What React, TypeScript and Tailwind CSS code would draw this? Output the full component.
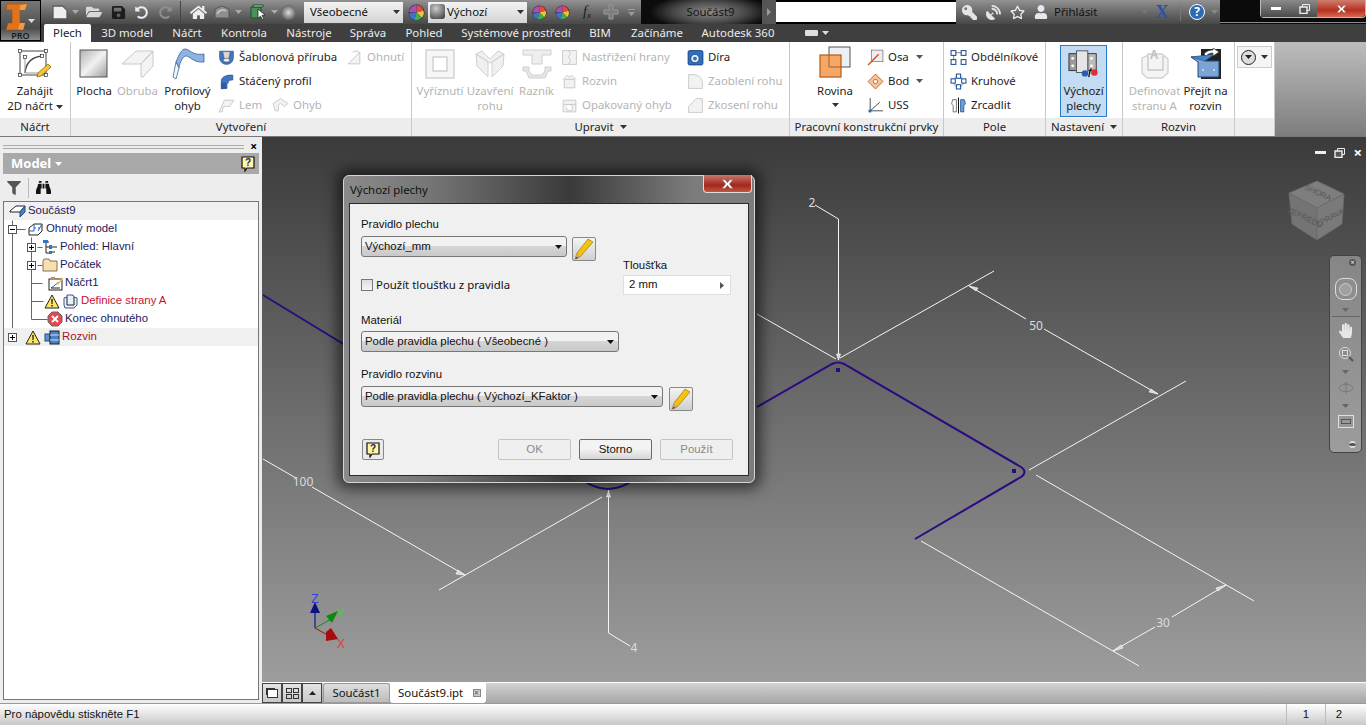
import { ReactNode } from "react";
import { FaHome, FaFolderOpen, FaSave, FaUndoAlt, FaRedoAlt, FaKey, FaRegStar, FaUser, FaSatelliteDish, FaFilter, FaBinoculars, FaHandPaper } from "react-icons/fa";

function Caret({ className = "", color = "#555" }: { className?: string; color?: string }) {
    return (
        <svg width="7" height="4" viewBox="0 0 7 4" className={className}>
            <path d="M0 0h7L3.5 4z" fill={color} />
        </svg>
    );
}

function Ico({ size = 17, children }: { size?: number; children: ReactNode }) {
    return <svg width={size} height={size} viewBox="0 0 32 32" className="shrink-0">{children}</svg>;
}

/* ---------- small drawings ---------- */
const Pencil = () => (
    <svg width="20" height="22" viewBox="0 0 20 22">
        <path d="M14 1l5 3L6 19 1 21l2-6z" fill="#f4c20d" stroke="#8a6b00" strokeWidth=".6" />
        <path d="M3 15l3 4-5 2z" fill="#caa27a" />
        <path d="M1 21l2-2 1 1z" fill="#111" />
    </svg>
);
const Warn = () => (
    <svg width="16" height="15" viewBox="0 0 16 15" className="shrink-0">
        <path d="M8 1l7 13H1z" fill="#ffe566" stroke="#222" strokeWidth="1" strokeLinejoin="round" />
        <path d="M7.3 5h1.4l-.2 5h-1zM7.3 11h1.4v1.4H7.3z" fill="#111" />
    </svg>
);
const ErrorIcon = () => (
    <svg width="16" height="16" viewBox="0 0 16 16" className="shrink-0">
        <path d="M5 1h6l4 4v6l-4 4H5l-4-4V5z" fill="#e8474f" stroke="#666" />
        <path d="M5 5l6 6M11 5l-6 6" stroke="#fff" strokeWidth="2" />
    </svg>
);
const HelpBook = () => (
    <svg width="14" height="16" viewBox="0 0 14 16">
        <path d="M1 1h12v11H6l-2 3v-3H1z" fill="#fff7a8" stroke="#111" strokeWidth="1.2" />
        <text x="7" y="10" textAnchor="middle" fontSize="10" fontWeight="700" fill="#1a1a6a" fontFamily="Liberation Sans, sans-serif">?</text>
    </svg>
);
const Expand = ({ open = false }: { open?: boolean }) => (
    <span className="relative flex h-[9px] w-[9px] shrink-0 items-center justify-center border border-[#555] bg-white">
        <span className="h-px w-[5px] bg-black" />
        {!open && <span className="absolute h-[5px] w-px bg-black" />}
    </span>
);

const Sketch2D = () => (
    <svg width="34" height="30" viewBox="0 0 34 30">
        <rect x="2" y="2" width="26" height="24" fill="none" stroke="#444" />
        <path d="M7 24C8 13 14 8 24 7" fill="none" stroke="#444" strokeWidth="1.4" />
        <path d="M7 24h15M7 24V8" fill="none" stroke="#999" />
        {[[2, 2], [28, 2], [2, 26], [28, 26], [7, 8], [24, 7]].map(([x, y]) => <rect key={x + "-" + y} x={x - 1.5} y={y - 1.5} width="3" height="3" fill="#fff" stroke="#333" strokeWidth=".7" />)}
        <path d="M30 15l3 3-10 9-4 1 1-4z" fill="#f7c531" stroke="#7a5a00" strokeWidth=".7" />
    </svg>
);
const Plocha = () => (
    <svg width="30" height="30" viewBox="0 0 30 30">
        <defs><linearGradient id="pl" x1="0" y1="0" x2="1" y2="1"><stop offset="0" stopColor="#b0b0b0" /><stop offset=".5" stopColor="#f2f2f2" /><stop offset="1" stopColor="#9d9d9d" /></linearGradient></defs>
        <rect x="1" y="1" width="27" height="27" fill="url(#pl)" stroke="#555" />
    </svg>
);
const Obruba = () => (
    <svg width="34" height="30" viewBox="0 0 34 30">
        <path d="M1 15L15 2h17l-12 13H1zM20 15l12-13v15L22 28h-2z" fill="#f3f3f3" stroke="#c8c8c8" />
    </svg>
);
const Profil = () => (
    <svg width="34" height="32" viewBox="0 0 34 32">
        <path d="M5 14C8 6 11 1 14 1c5 0 7 7 19 5v8C22 15 19 8 15 8c-3 0-6 6-7 12z" fill="#8db3e2" stroke="#27528c" strokeWidth=".7" />
        <path d="M5 14l3 6-3 11-3-2z" fill="#f2f5fa" stroke="#27528c" strokeWidth=".7" />
    </svg>
);
const Template = () => (
    <Ico><path d="M3 4h26v12c0 8-6 13-13 13S3 24 3 16z" fill="#3f76bd" stroke="#1f3f70" /><path d="M9 5h14l-3 14h-8z" fill="#d8d8d8" stroke="#555" /><ellipse cx="16" cy="21" rx="6" ry="3.5" fill="#eee" stroke="#444" /></Ico>
);
const Twist = () => (
    <Ico><path d="M6 30V16C6 8 14 3 28 4v9c-6 0-9 2-9 6l-2 2v8z" fill="#3d77c4" stroke="#1f3f70" /><path d="M6 18h9v12H6z" fill="#2f5c98" /></Ico>
);
const GrayShape = ({ d }: { d: string }) => <Ico><path d={d} fill="#f2f2f2" stroke="#c4c4c4" strokeWidth="1.6" /></Ico>;

const Vyriznuti = () => (
    <svg width="30" height="30" viewBox="0 0 30 30"><rect x="1" y="1" width="28" height="28" fill="#f6f6f6" stroke="#d0d0d0" strokeWidth="1.4" /><rect x="8" y="8" width="14" height="14" fill="#fff" stroke="#cfcfcf" strokeWidth="1.4" /></svg>
);
const Uzavreni = () => (
    <svg width="30" height="30" viewBox="0 0 30 30"><path d="M1 5l12 8v15L2 17zM29 5L17 13v15l11-11zM1 5l6-3 8 8 8-8 6 3-14 9z" fill="#f0f0f0" stroke="#d0d0d0" /></svg>
);
const Raznik = () => (
    <svg width="30" height="32" viewBox="0 0 30 32"><path d="M1 2h28v5H20v9h-10V7H1z" fill="#eee" stroke="#cfcfcf" /><path d="M1 19h6v4l3 4h10l3-4v-4h6v4h-3l-3 7H7l-3-7H1z" fill="#e6e6e6" stroke="#cfcfcf" /></svg>
);
const Rovina = () => (
    <svg width="32" height="32" viewBox="0 0 32 32"><rect x="10" y="1" width="21" height="20" fill="#eceff3" stroke="#555" /><rect x="1" y="9" width="21" height="22" fill="#f4a766" stroke="#b9590f" strokeWidth="1.2" /><path d="M10 9v12h12" fill="none" stroke="#a85c20" /></svg>
);
const Holes = () => (
    <svg width="32" height="30" viewBox="0 0 34 30">
        <rect x="1" y="4" width="8" height="18" fill="#999" stroke="#333" /><rect x="21" y="4" width="9" height="18" fill="#bbb" stroke="#333" />
        <rect x="9" y="1" width="12" height="23" fill="#e5e5e5" stroke="#555" />
        <circle cx="5" cy="9" r="1.5" fill="#fff" /><circle cx="5" cy="17" r="1.5" fill="#fff" /><circle cx="25" cy="9" r="1.5" fill="#fff" /><circle cx="25" cy="17" r="1.5" fill="#fff" />
        <circle cx="18" cy="25" r="3.4" fill="#2460ae" /><circle cx="28" cy="24" r="3.4" fill="#d92f35" />
        <path d="M22 29c1-4 1-8 3-9" fill="none" stroke="#111" strokeWidth="1.4" />
    </svg>
);
const DefA = () => (
    <svg width="34" height="32" viewBox="0 0 34 32">
        <path d="M4 10l6-3v-1h14l6 5v14l-6 5H9l-5-5z" fill="#f4f4f4" stroke="#cfcfcf" strokeWidth="1.3" />
        <path d="M10 8v14h15V8" fill="none" stroke="#c6c6c6" strokeWidth="1.3" />
        <text x="16" y="11" fontSize="12" fill="#c0c0c0" textAnchor="middle" fontFamily="Liberation Sans, sans-serif" fontWeight="700">A</text>
    </svg>
);
const Unfold = () => (
    <svg width="32" height="32" viewBox="0 0 32 32">
        <path d="M11 1h20v30H11z" fill="#222" />
        <path d="M1 9h11l3 4h14v16H8V14z" fill="#7ba3d4" stroke="#1f4a83" />
        <path d="M1 9l24-3-10 7z" fill="#4a82c7" stroke="#1f4a83" strokeWidth=".6" />
        <path d="M14 6c2-3 6-4 9-4V0l6 4-6 4V5c-3 0-5 1-7 3z" fill="#fff" stroke="#444" strokeWidth=".7" />
        <circle cx="13" cy="22" r="1" fill="#dbe6f3" /><circle cx="24" cy="22" r="1" fill="#dbe6f3" />
    </svg>
);
const Wheel = ({ size = 16 }: { size?: number }) => (
    <svg width={size} height={size} viewBox="0 0 16 16" className="shrink-0">
        <circle cx="8" cy="8" r="7.5" fill="#2a2a2a" />
        <path d="M8 8V1a7 7 0 0 1 6.5 5z" fill="#e8483f" /><path d="M8 8l6.5-2a7 7 0 0 1-1.5 7z" fill="#e6c63a" />
        <path d="M8 8l5 5a7 7 0 0 1-7 2z" fill="#44ad4e" /><path d="M8 8l-2 7a7 7 0 0 1-5-6z" fill="#3478d0" />
        <path d="M8 8H1a7 7 0 0 1 7-7z" fill="#a84fb6" />
    </svg>
);
const WinX = ({ size = 11 }: { size?: number }) => (
    <svg width={size} height={size - 3} viewBox="0 0 11 8"><path d="M1 0.5h2.5L5.5 3l2-2.5H10L7 4l3 3.5H7.5L5.5 5l-2 2.5H1L4 4z" fill="#fff" stroke="#777" strokeWidth=".4" /></svg>
);
const Restore = () => (
    <svg width="11" height="10" viewBox="0 0 11 10"><path d="M3.5.5h7v6h-7z" fill="none" stroke="#eee" /><path d="M1 3h7v6.5H1z" fill="#555" stroke="#eee" strokeWidth="1.4" /></svg>
);

/* ---------- ribbon pieces ---------- */
function Large({ icon, lines, width, disabled, caret }: { icon: ReactNode; lines: string[]; width: string; disabled?: boolean; caret?: boolean }) {
    return (
        <div className={`flex h-[76px] shrink-0 flex-col items-center pt-[4px] leading-[15px] ${width} ${disabled ? "text-[#b4b4b4]" : "text-[#1d1d1d]"}`}>
            <div className="flex h-[36px] items-center justify-center">{icon}</div>
            <div className="mt-[1px] text-center whitespace-nowrap">{lines[0]}</div>
            <div className="text-center whitespace-nowrap">{lines[1]}{caret && <Caret className="ml-[3px] inline align-middle" color="#333" />}</div>
        </div>
    );
}
function Small({ icon, label, disabled, caret, className = "" }: { icon: ReactNode; label: string; disabled?: boolean; caret?: boolean; className?: string }) {
    return (
        <div className={`flex h-[24px] items-center gap-[4px] whitespace-nowrap ${disabled ? "text-[#b4b4b4]" : "text-[#1d1d1d]"} ${className}`}>
            {icon}<span>{label}</span>{caret && <Caret className="ml-[3px]" />}
        </div>
    );
}
function Panel({ width, title, children, caret }: { width: string; title: string; children?: ReactNode; caret?: boolean }) {
    return (
        <div className={`flex shrink-0 flex-col border-r border-[#c9c9c9] ${width}`}>
            <div className="flex h-[76px] bg-white">{children}</div>
            <div className="flex h-[18px] items-center justify-center gap-[6px] bg-[#ededed] text-[#222]">{title}{caret && <Caret color="#333" />}</div>
        </div>
    );
}
const Col = ({ className = "", children }: { className?: string; children: ReactNode }) => <div className={`flex flex-col pt-[3px] ${className}`}>{children}</div>;

const tabs = [
    { label: "3D model", w: "w-[72px]" }, { label: "Náčrt", w: "w-[48px]" }, { label: "Kontrola", w: "w-[66px]" },
    { label: "Nástroje", w: "w-[64px]" }, { label: "Správa", w: "w-[54px]" }, { label: "Pohled", w: "w-[58px]" },
    { label: "Systémové prostředí", w: "w-[126px]" }, { label: "BIM", w: "w-[42px]" }, { label: "Začínáme", w: "w-[72px]" }, { label: "Autodesk 360", w: "w-[90px]" },
];

function AppButton() {
    return (
        <div className="absolute top-0 left-0 z-10 flex h-[41px] w-[41px] flex-col items-center border border-black bg-[linear-gradient(#777,#4c4c4c_70%,#8e8e8e)]">
            <svg width="26" height="28" viewBox="0 0 26 28" className="mt-[2px] mr-[6px]">
                <path d="M2 1h20l-2 6h-5v13h5l-2 7H1l2-7h4V7H1z" fill="#e0741e" stroke="#a34d0c" strokeWidth=".6" />
                <path d="M15 7h5l2-6-7 1zM15 20h5l-2 7-5-1z" fill="#f29a45" />
            </svg>
            <Caret className="absolute top-[18px] right-[5px]" color="#ddd" />
            <span className="text-[9px] leading-[9px] font-semibold text-[#1a1a1a]">PRO</span>
        </div>
    );
}

function TitleBar() {
    const Q = ({ w, children }: { w: string; children?: ReactNode }) => <div className={`flex h-[24px] shrink-0 items-center justify-center ${w}`}>{children}</div>;
    const bar = "bg-[linear-gradient(#929292,#6a6a6a_50%,#484848)]";
    return (
        <div className="flex h-[24px] bg-black">
            <div className={`flex h-[24px] w-[641px] shrink-0 items-center pl-[52px] text-[#e4e4e4] ${bar}`}>
                <Q w="w-[16px]"><svg width="16" height="15" viewBox="0 0 15 14"><path d="M1 1h9l4 4v8H1z" fill="#eee" stroke="#555" /></svg></Q>
                <Q w="w-[14px]"><Caret color="#aaa" /></Q>
                <Q w="w-[24px]"><FaFolderOpen size={16} color="#d8d8d8" /></Q>
                <Q w="w-[24px]"><FaSave size={15} color="#1d1d1d" /></Q>
                <Q w="w-[23px]"><FaUndoAlt size={13} color="#ececec" /></Q>
                <Q w="w-[24px]"><FaRedoAlt size={13} color="#8e8e8e" /></Q>
                <div className="mx-[3px] h-[22px] w-px bg-[#444]" />
                <div className="w-[3px]" />
                <Q w="w-[24px]"><FaHome size={17} color="#eee" /></Q>
                <Q w="w-[24px]"><svg width="16" height="14" viewBox="0 0 16 14"><path d="M1 4l7-3 7 3v9H1z" fill="#8f8f8f" stroke="#555" /><path d="M3 9c2-4 6-5 9-3" fill="none" stroke="#ccc" strokeWidth="1.5" /></svg></Q>
                <Q w="w-[8px]"><Caret color="#aaa" /></Q>
                <div className="w-[5px]" />
                <Q w="w-[24px]"><svg width="17" height="16" viewBox="0 0 17 16"><path d="M1 3h10v11H1z" fill="#46935a" stroke="#1e4e2b" /><path d="M3 1h10v2H3z" fill="#bcd6c2" stroke="#1e4e2b" /><path d="M8 5l7 6-3 .5 2 3.5-1.5.7-2-3.5-2.5 2z" fill="#fff" stroke="#111" strokeWidth=".7" /></svg></Q>
                <Q w="w-[8px]"><Caret color="#aaa" /></Q>
                <Q w="w-[20px]"><span className="h-[15px] w-[15px] rounded-full bg-[radial-gradient(circle,#ddd,#999_40%,#333)]" /></Q>
                <div className="mr-[1px] ml-[6px] flex h-[21px] w-[99px] shrink-0 items-center justify-between bg-[linear-gradient(#f3f3f3,#d4d4d4)] pr-[3px] pl-[6px] text-[#111]">Všeobecné<Caret color="#333" /></div>
                <Q w="w-[24px]"><Wheel size={17} /></Q>
                <div className="flex h-[21px] w-[99px] shrink-0 items-center justify-between bg-[linear-gradient(#f3f3f3,#d4d4d4)] pr-[3px] pl-[2px] text-[#111]"><span className="flex items-center gap-[2px]"><span className="h-[15px] w-[15px] rounded-[3px] bg-[radial-gradient(circle_at_40%_30%,#ccc,#333)]" />Výchozí</span><Caret color="#333" /></div>
                <Q w="w-[24px]"><Wheel size={15} /></Q>
                <Q w="w-[23px]"><Wheel size={15} /></Q>
                <Q w="w-[26px]"><span className="font-['Liberation_Serif'] text-[14px] leading-none text-[#1a1a1a] italic">f<sub className="text-[9px]">x</sub></span></Q>
                <Q w="w-[22px]"><svg width="16" height="16" viewBox="0 0 16 16"><path d="M6 1h4v5h5v4h-5v5H6v-5H1V6h5z" fill="#7e7e7e" stroke="#999" /></svg></Q>
                <Q w="w-[19px]"><span className="flex flex-col items-center gap-[2px]"><span className="h-px w-[7px] bg-[#9a9a9a]" /><Caret color="#9a9a9a" /></span></Q>
            </div>
            <div className="flex h-[24px] w-[121px] shrink-0 items-center justify-center bg-[radial-gradient(ellipse_60px_18px_at_57%_50%,#8a8a8a,#484848_60%,#0c0c0c)] pl-[18px] text-[#141414]">Součást9</div>
            <div className="flex h-[24px] w-[14px] shrink-0 items-center justify-center bg-[#555]"><svg width="4" height="8" viewBox="0 0 4 8"><path d="M0 0l4 4-4 4z" fill="#999" /></svg></div>
            <div className="my-[2px] h-[20px] w-[180px] shrink-0 bg-white" />
            <div className={`flex h-[24px] w-[264px] shrink-0 items-center pl-[1px] text-[#ececec] ${bar}`}>
                <Q w="w-[24px]"><FaKey size={15} color="#e4e4e4" className="-scale-x-100" /></Q>
                <Q w="w-[24px]"><FaSatelliteDish size={15} color="#e4e4e4" /></Q>
                <Q w="w-[24px]"><FaRegStar size={15} color="#f2f2f2" /></Q>
                <Q w="w-[24px]"><FaUser size={14} color="#e8e8e8" /></Q>
                <span className="ml-[1px] w-[85px] text-[#111]">Přihlásit</span>
                <Q w="w-[12px]"><Caret color="#777" /></Q>
                <div className="w-[2px]" />
                <Q w="w-[20px]"><span className="font-['Liberation_Serif'] text-[18px] leading-none font-bold text-[#2f4fa8]">X</span></Q>
                <div className="ml-[8px] h-[17px] w-px bg-[#777]" />
                <div className="w-[5px]" />
                <Q w="w-[22px]"><span className="flex h-[16px] w-[16px] items-center justify-center rounded-full border border-white bg-[#2e6bb4] text-[12px] leading-none font-bold text-white">?</span></Q>
                <Q w="w-[12px]"><Caret color="#888" /></Q>
            </div>
            <div className="flex h-[24px] flex-1 flex-col bg-[#0b0b0b]">
                <div className="ml-[40px] flex h-[18px] rounded-b-[4px] border border-t-0 border-[#bbb] text-white">
                    <div className="flex w-[30px] items-center justify-center bg-[linear-gradient(#8a8a8a,#4a4a4a)]"><span className="h-[3px] w-[10px] bg-white" /></div>
                    <div className="flex w-[26px] items-center justify-center bg-[linear-gradient(#8a8a8a,#4a4a4a)]"><Restore /></div>
                    <div className="flex flex-1 items-center justify-center rounded-br-[4px] bg-[linear-gradient(#cf7d6e,#b8301f_60%,#d56a52)]"><WinX /></div>
                </div>
                <div className="mt-auto mb-[1px] h-px bg-[#8a8a8a]" />
            </div>
        </div>
    );
}

function Ribbon() {
    return (
        <div className="flex h-[95px] shrink-0 border-b border-[#777]">
            <Panel width="w-[71px]" title="Náčrt"><Large width="w-[70px]" icon={<Sketch2D />} lines={["Zahájit", "2D náčrt"]} caret /></Panel>
            <Panel width="w-[341px]" title="Vytvoření">
                <div className="w-[2px]" />
                <Large width="w-[42px]" icon={<Plocha />} lines={["Plocha", ""]} />
                <Large width="w-[45px]" disabled icon={<Obruba />} lines={["Obruba", ""]} />
                <Large width="w-[55px]" icon={<Profil />} lines={["Profilový", "ohyb"]} />
                <Col className="ml-[3px] w-[127px]">
                    <Small icon={<Template />} label="Šablonová příruba" />
                    <Small icon={<Twist />} label="Stáčený profil" />
                    <div className="flex gap-[10px]">
                        <Small disabled icon={<GrayShape d="M2 28L12 6h18l-8 12H10l-2 10z" />} label="Lem" />
                        <Small disabled icon={<GrayShape d="M2 12L16 3l14 9-6 6-8-6-4 3v11H6z" />} label="Ohyb" />
                    </div>
                </Col>
                <Col className="ml-[1px]"><Small disabled icon={<GrayShape d="M4 28L26 6v22zM12 6c6-4 12-2 14 2" />} label="Ohnutí" /></Col>
            </Panel>
            <Panel width="w-[378px]" title="Upravit" caret>
                <div className="w-[3px]" />
                <Large width="w-[50px]" disabled icon={<Vyriznuti />} lines={["Vyříznutí", ""]} />
                <Large width="w-[50px]" disabled icon={<Uzavreni />} lines={["Uzavření", "rohu"]} />
                <Large width="w-[43px]" disabled icon={<Raznik />} lines={["Razník", ""]} />
                <Col className="ml-[3px] w-[126px]">
                    <Small disabled icon={<GrayShape d="M3 3h26v26H3zM14 3l4 6-4 6 4 7-4 7" />} label="Nastřižení hrany" />
                    <Small disabled icon={<GrayShape d="M6 12h20v16H6zM4 12l8-8 4 4 4-4 8 8" />} label="Rozvin" />
                    <Small disabled icon={<GrayShape d="M4 6h24v22H4zM4 14h24M10 20a6 6 0 1 0 6-6" />} label="Opakovaný ohyb" />
                </Col>
                <Col>
                    <Small icon={<Ico><rect x="2" y="3" width="28" height="27" rx="3" fill="#2e6fc0" stroke="#123a70" strokeWidth="1.5" /><circle cx="15" cy="18" r="8" fill="#dfe9f6" stroke="#123a70" strokeWidth="1.5" /><circle cx="15" cy="18" r="3.5" fill="#2e6fc0" /></Ico>} label="Díra" />
                    <Small disabled icon={<GrayShape d="M3 3h10c9 0 16 8 16 16v10H3z" />} label="Zaoblení rohu" />
                    <Small disabled icon={<GrayShape d="M3 29V18L17 3h12v26z" />} label="Zkosení rohu" />
                </Col>
            </Panel>
            <Panel width="w-[154px]" title="Pracovní konstrukční prvky">
                <div className="flex h-[76px] w-[74px] shrink-0 flex-col items-center pt-[4px] pl-[16px] leading-[15px] text-[#1d1d1d]">
                    <div className="h-[36px]"><Rovina /></div>
                    <div className="mt-[1px]">Rovina</div>
                    <Caret className="mt-[5px]" color="#333" />
                </div>
                <Col className="ml-[3px]">
                    <Small caret icon={<Ico><rect x="8" y="2" width="22" height="22" fill="#eee" stroke="#444" /><path d="M2 30L22 10" stroke="#c8501e" strokeWidth="2.4" /></Ico>} label="Osa" />
                    <Small caret icon={<Ico><path d="M16 2l14 14-14 14L2 16z" fill="#f6c39a" stroke="#b9590f" strokeWidth="1.6" /><circle cx="16" cy="16" r="4" fill="#fff" stroke="#b9590f" strokeWidth="1.6" /></Ico>} label="Bod" />
                    <Small icon={<Ico><path d="M6 2v24h24M6 26L24 10" fill="none" stroke="#333" strokeWidth="1.6" /><rect x="3" y="24" width="5" height="5" fill="#2563c7" /></Ico>} label="USS" />
                </Col>
            </Panel>
            <Panel width="w-[102px]" title="Pole">
                <Col className="ml-[6px]">
                    <Small icon={<Ico><g fill="#fff" stroke="#1e4f96" strokeWidth="2"><rect x="2" y="3" width="9" height="9" /><rect x="21" y="3" width="9" height="9" /><rect x="2" y="20" width="9" height="9" /><rect x="21" y="20" width="9" height="9" /></g><path d="M11 7h10M7 12v8" stroke="#111" /></Ico>} label="Obdélníkové" />
                    <Small icon={<Ico><circle cx="16" cy="16" r="10" fill="none" stroke="#555" /><g fill="#fff" stroke="#1e4f96" strokeWidth="2"><rect x="12" y="2" width="8" height="8" /><rect x="2" y="11" width="8" height="8" /><rect x="22" y="11" width="8" height="8" /><rect x="12" y="22" width="8" height="8" /></g></Ico>} label="Kruhové" />
                    <Small icon={<Ico><path d="M16 1v30" stroke="#111" strokeWidth="2" /><path d="M12 5H5l-2 8 3 3v12h6z" fill="#fff" stroke="#555" strokeWidth="1.5" /><path d="M20 5h7l2 8-3 3v12h-6z" fill="#6ea0d8" stroke="#1e4f96" strokeWidth="1.5" /></Ico>} label="Zrcadlit" />
                </Col>
            </Panel>
            <Panel width="w-[77px]" title="Nastavení" caret>
                <div className="mt-[3px] ml-[14px] flex h-[72px] w-[47px] flex-col items-center border border-[#2a7bc8] bg-[#c3dbf3] pt-[3px] leading-[15px] text-[#1d1d1d]">
                    <div className="h-[33px]"><Holes /></div>
                    <div className="mt-[1px]">Výchozí</div>
                    <div>plechy</div>
                </div>
            </Panel>
            <Panel width="w-[112px]" title="Rozvin">
                <div className="w-[6px]" />
                <Large width="w-[51px]" disabled icon={<DefA />} lines={["Definovat", "stranu A"]} />
                <Large width="w-[51px]" icon={<Unfold />} lines={["Přejít na", "rozvin"]} />
            </Panel>
            <div className="flex w-[40px] shrink-0 flex-col border-r border-[#c9c9c9]">
                <div className="h-[76px] bg-white pt-[4px] pl-[2px]">
                    <div className="flex h-[22px] w-[35px] items-center justify-center gap-[5px] border border-[#ccc] bg-[#f5f5f5]">
                        <span className="flex h-[15px] w-[15px] items-center justify-center rounded-full border border-[#222] bg-[#ddd]"><Caret color="#222" /></span><Caret color="#333" />
                    </div>
                </div>
                <div className="h-[18px] bg-[#ededed]" />
            </div>
            <div className="flex-1 bg-[linear-gradient(#bdbdbd,#7d7d7d)]" />
        </div>
    );
}

function TreeRow({ pl, bg, children }: { pl: string; bg?: boolean; children: ReactNode }) {
    return <div className={`flex h-[18px] items-center ${pl} ${bg ? "bg-[#f0f0f0]" : ""}`}>{children}</div>;
}

function ModelPanel() {
    const lines = ["M12 220v113", "M12 229h13", "M12 337h5", "M31 237v82", "M37 247h5", "M37 265h5", "M31 283h11", "M31 301h12", "M31 319h16"];
    return (
        <div className="flex h-[566px] w-[262px] shrink-0 flex-col bg-[#ededed] pt-[4px]">
            <div className="flex h-[12px] shrink-0 items-center pr-[5px] pl-[3px]">
                <div className="h-[4px] flex-1 border-y border-[#aaa]" />
                <span className="ml-[6px] text-[12px] leading-none font-bold text-black">×</span>
            </div>
            <div className="mx-[3px] flex h-[21px] shrink-0 items-center justify-between bg-[#a9a9a9] pr-[4px] pl-[8px] text-[13px] font-bold text-white">
                <span className="flex items-center gap-[4px]">Model<Caret color="#fff" /></span>
                <HelpBook />
            </div>
            <div className="mx-[3px] flex h-[27px] shrink-0 items-center pl-[4px]">
                <FaFilter size={14} color="#555" />
                <div className="mx-[7px] h-[20px] w-px bg-[#bbb]" />
                <FaBinoculars size={15} color="#111" />
            </div>
            <div className="relative mx-[3px] h-[499px] shrink-0 border border-[#777] bg-white font-['Liberation_Sans',sans-serif] text-[#1a1a5e]">
                <svg className="absolute top-[-202px] left-[-4px]" width="60" height="350" viewBox="0 0 60 350">
                    <path d={lines.join(" ")} stroke="#666" fill="none" transform="translate(0.5 0.5)" />
                </svg>
                <div className="relative">
                    <TreeRow pl="pl-[5px]" bg>
                        <svg width="17" height="14" viewBox="0 0 17 14" className="mr-[2px] shrink-0"><path d="M1 7l6-5h9l-5 6H1z" fill="#fff" stroke="#222" /><path d="M11 8l5-6v6l-5 5z" fill="#4b83c9" stroke="#1f4a83" /></svg>Součást9
                    </TreeRow>
                    <TreeRow pl="pl-[4px]">
                        <Expand open />
                        <span className="mr-[3px] ml-[11px]"><svg width="15" height="13" viewBox="0 0 15 13"><path d="M1 5l5-4h8v7l-4 4H1z" fill="#fff" stroke="#222" /><path d="M6 1v7H1M10 8l4-7M6 5h2M10 5h2" stroke="#2563c7" fill="none" /></svg></span>Ohnutý model
                    </TreeRow>
                    <TreeRow pl="pl-[23px]">
                        <Expand />
                        <span className="mr-[2px] ml-[7px]"><svg width="15" height="15" viewBox="0 0 15 15"><path d="M2 2h4M3 2v11h3M3 7h3M9 7h5M9 12h3" stroke="#222" fill="none" /><rect x="0" y="0" width="5" height="3" fill="#2f78c8" /><rect x="6" y="5" width="3" height="4" fill="#2f78c8" /><rect x="6" y="11" width="3" height="3" fill="#2f78c8" /></svg></span>Pohled: Hlavní
                    </TreeRow>
                    <TreeRow pl="pl-[23px]">
                        <Expand />
                        <span className="mr-[2px] ml-[6px]"><svg width="16" height="14" viewBox="0 0 16 14"><path d="M1 3l1-2h5l1 2h7v10H1z" fill="#f5deb0" stroke="#857352" /></svg></span>Počátek
                    </TreeRow>
                    <TreeRow pl="pl-[44px]">
                        <span className="mr-[2px]"><svg width="15" height="15" viewBox="0 0 15 15"><rect x="1" y="3" width="13" height="11" fill="#fff" stroke="#222" /><path d="M3 12l8-6" stroke="#2563c7" /><path d="M3 12h9" stroke="#222" /><path d="M3 1h4v3H3z" fill="#e8823a" /><path d="M9 8l5-6 1 1-5 6z" fill="#f7c531" /></svg></span>Náčrt1
                    </TreeRow>
                    <TreeRow pl="pl-[40px]">
                        <Warn />
                        <span className="mr-[3px] ml-[2px]"><svg width="16" height="15" viewBox="0 0 16 15"><path d="M2 4l3-1V1h6l1 2 3 1v7l-3 3H3l-1-3z" fill="#e9f0f8" stroke="#345a8c" /><path d="M5 3v8h7V3" fill="none" stroke="#222" /></svg></span><span className="text-[#c8102e]">Definice strany A</span>
                    </TreeRow>
                    <TreeRow pl="pl-[43px]"><span className="mr-[2px]"><ErrorIcon /></span>Konec ohnutého</TreeRow>
                    <TreeRow pl="pl-[4px]" bg>
                        <Expand />
                        <span className="ml-[8px]"><Warn /></span>
                        <span className="mr-[2px] ml-[3px]"><svg width="16" height="15" viewBox="0 0 16 15"><rect x="1" y="4" width="5" height="7" fill="#5f93cf" stroke="#1f4a83" /><rect x="6" y="1" width="9" height="13" fill="#4c82c3" stroke="#123" /><path d="M6 5h9M6 10h9" stroke="#cde" /></svg></span><span className="text-[#a8102a]">Rozvin</span>
                    </TreeRow>
                </div>
            </div>
        </div>
    );
}

function Select({ width, label }: { width: string; label: string }) {
    return (
        <div className={`flex h-[21px] shrink-0 items-center justify-between rounded-[3px] border border-[#777] bg-[linear-gradient(#f2f2f2_45%,#d5d5d5_50%,#c9c9c9)] pr-[4px] pl-[3px] text-[#111] ${width}`}>
            {label}<Caret color="#111" />
        </div>
    );
}
function PencilBtn() {
    return <div className="mt-[1px] flex h-[24px] w-[24px] shrink-0 items-center justify-center rounded-[2px] border border-[#888] bg-[linear-gradient(#f4f4f4,#cfcfcf)]"><Pencil /></div>;
}
function DlgBtn({ label, disabled }: { label: string; disabled?: boolean }) {
    return (
        <div className={`flex h-[21px] w-[73px] items-center justify-center rounded-[2px] border ${disabled ? "border-[#c4c4c4] bg-[#efefef] text-[#8b8b8b]" : "border-[#6b6b6b] bg-[linear-gradient(#f3f3f3_45%,#d6d6d6)] text-[#111]"}`}>{label}</div>
    );
}

function Dialog() {
    return (
        <div className="absolute top-[38px] left-[81px] flex h-[308px] w-[412px] flex-col rounded-[6px] border border-[#d5d5d5] bg-[linear-gradient(90deg,#8a8a8a,#777_20%,#3a3a3a_55%,#7c7c7c_85%,#7c7c7c)] px-[5px] pb-[6px] shadow-[0_0_14px_6px_rgba(0,0,0,0.55)]">
            <div className="relative flex h-[27px] shrink-0 items-center pt-[1px] pl-[1px] text-[#111]">
                Výchozí plechy
                <div className="absolute top-[-1px] right-[-3px] flex h-[18px] w-[49px] items-center justify-center rounded-b-[4px] border border-t-0 border-[#ddd] bg-[linear-gradient(#c9766a,#a4281c_60%,#c55540)]"><WinX size={13} /></div>
            </div>
            <div className="flex-1 border border-[#2a2a2a] bg-[#f0f0f0] pt-[13px] pl-[11px] font-['Liberation_Sans',sans-serif] text-[#111]">
                <div className="leading-[15px]">Pravidlo plechu</div>
                <div className="mt-[4px] flex items-start gap-[5px]"><Select width="w-[206px]" label="Výchozí_mm" /><PencilBtn /></div>
                <div className="mt-[-3px] flex">
                    <div className="mt-[20px] flex h-[13px] w-[262px] items-center gap-[3px] font-['Noto_Sans',sans-serif]">
                        <span className="h-[12px] w-[12px] border border-[#777] bg-[linear-gradient(#ddd,#f4f4f4)]" />Použít tloušťku z pravidla
                    </div>
                    <div>
                        <div className="leading-[15px]">Tloušťka</div>
                        <div className="mt-[2px] flex h-[20px] w-[108px] items-center justify-between border border-[#dedede] bg-white pr-[6px] pl-[5px]">2 mm<svg width="4" height="7" viewBox="0 0 4 7"><path d="M0 0l4 3.5L0 7z" fill="#555" /></svg></div>
                    </div>
                </div>
                <div className="mt-[18px] leading-[15px]">Materiál</div>
                <div className="mt-[3px]"><Select width="w-[258px]" label="Podle pravidla plechu ( Všeobecné )" /></div>
                <div className="mt-[15px] leading-[15px]">Pravidlo rozvinu</div>
                <div className="mt-[4px] flex items-start gap-[6px]"><Select width="w-[302px]" label="Podle pravidla plechu ( Výchozí_KFaktor )" /><PencilBtn /></div>
                <div className="mt-[28px] flex items-center pr-[15px]">
                    <div className="ml-[1px] flex h-[21px] w-[22px] items-center justify-center rounded-[2px] border border-[#888] bg-[#e9e9e9]"><HelpBook /></div>
                    <div className="ml-auto flex gap-[8px]"><DlgBtn disabled label="OK" /><DlgBtn label="Storno" /><DlgBtn disabled label="Použít" /></div>
                </div>
            </div>
        </div>
    );
}

function Drawing() {
    const white = [
        "M815 205L838.5 219V358", "M757 314L836 359", "M840 358L994 271", "M969 286L1026 319", "M1044 329L1158 394", "M1029 470L1186 381",
        "M1036 475L1254 601", "M921 541L1139 666", "M1113 651L1155 627", "M1172 617L1226 585",
        "M263 459L296 478", "M312 487L465 575", "M439 590L602 497", "M608.5 490V633L630 646",
    ];
    const labels: [string, number, number][] = [["2", 812, 207], ["50", 1036, 330], ["100", 303, 486], ["4", 634, 652], ["30", 1163, 627]];
    return (
        <svg className="absolute top-0 left-0" width="1104" height="546" viewBox="262 137 1104 546">
            <g stroke="#2c0a80" strokeWidth="2" fill="none">
                <path d="M263 295L345 345" />
                <path d="M757 407L832 364Q838 361 844 364L1021 467Q1028 472 1021 477L915 539" />
                <path d="M580 478Q608 500 636 478" />
            </g>
            <g fill="#2c0a80"><rect x="836" y="368" width="4" height="4" /><rect x="1012" y="469" width="4" height="4" /></g>
            <g stroke="#f5f5f5" strokeWidth="1" fill="none">{white.map((d) => <path key={d} d={d} />)}</g>
            <g fill="#d8d8d8" stroke="#fff" strokeWidth=".6">
                <path d="M969 286l9 2-2 3z" /><path d="M1158 394l-9-2 2-3z" /><path d="M465 575l-9-1 2-4z" /><path d="M1113 651l8-6 2 3z" /><path d="M1226 585l-8 6-2-3z" /><path d="M838.5 360l-2-6h4z" /><path d="M608.5 491l2 6h-4z" />
            </g>
            {labels.map(([t, x, y]) => <text key={t} x={x} y={y} textAnchor="middle" fontSize="12" fill="#dcdcdc" fontFamily="Noto Sans, sans-serif">{t}</text>)}
            {/* triad */}
            <path d="M315 628V610" stroke="#0a1a8c" strokeWidth="1.2" />
            <path d="M315 628L333 618" stroke="#0a8c1a" />
            <path d="M315 628L331 637" stroke="#a80d0d" />
            <path d="M315 602l5 11h-10z" fill="#0a1180" />
            <path d="M326 616l12-5-6 12z" fill="#0d8a0d" />
            <path d="M326 632l5-4 7 11-12 2z" fill="#a80d0d" />
            <text x="315" y="603" textAnchor="middle" fontSize="12" fill="#3a3ae0" fontFamily="Liberation Sans, sans-serif">Z</text>
            <text x="341" y="618" textAnchor="middle" fontSize="12" fill="#33d933" fontFamily="Liberation Sans, sans-serif">Y</text>
            <text x="341" y="648" textAnchor="middle" fontSize="12" fill="#e23c3c" fontFamily="Liberation Sans, sans-serif">X</text>
            {/* view cube */}
            <g stroke="#6b6b6b" strokeWidth=".8">
                <path d="M1317 181l27 13-27 14-28-15z" fill="#7e7e7e" />
                <path d="M1289 193l28 15v32l-25-16z" fill="#747474" />
                <path d="M1317 208l27-14-2 30-25 16z" fill="#7a7a7a" />
            </g>
            <g fontSize="8" fill="#585858" fontFamily="Liberation Sans, sans-serif" textAnchor="middle">
                <text transform="translate(1317 195) rotate(25)">SHORA</text>
                <text transform="translate(1304 220) rotate(25)">ZEPŘEDU</text>
                <text transform="translate(1331 220) rotate(-28)">ZPRAVA</text>
            </g>
        </svg>
    );
}

function NavBar() {
    return (
        <div className="absolute top-[118px] right-[4px] flex h-[198px] w-[33px] flex-col items-center rounded-[5px] border border-[#444] bg-[linear-gradient(#868686,#9c9c9c)] pt-[3px]">
            <span className="mr-[-14px] flex h-[7px] w-[7px] items-center justify-center rounded-full bg-[#555] text-[7px] leading-none text-white">×</span>
            <div className="mt-[12px] flex h-[22px] w-[22px] items-center justify-center rounded-[8px] border border-[#ddd] bg-[#8e8e8e]"><span className="h-[13px] w-[13px] rounded-full border border-[#ccc] bg-[#a0a0a0]" /></div>
            <Caret className="mt-[8px]" color="#666" />
            <div className="mt-[4px] h-px w-[28px] bg-[#666]" />
            <FaHandPaper className="mt-[6px]" size={15} color="#e6e6e6" />
            <svg width="16" height="16" viewBox="0 0 16 16" className="mt-[8px]"><circle cx="7" cy="7" r="5.5" fill="#8a8a8a" stroke="#ddd" /><rect x="4.5" y="4.5" width="5" height="5" fill="none" stroke="#e0e0e0" /><path d="M11 11l4 4" stroke="#555" strokeWidth="2" /></svg>
            <Caret className="mt-[8px]" color="#666" />
            <svg width="16" height="14" viewBox="0 0 16 14" className="mt-[7px]"><ellipse cx="8" cy="7" rx="7" ry="3.5" fill="none" stroke="#7a7a7a" /><path d="M8 1v12M5 4l3-3 3 3" fill="none" stroke="#7a7a7a" /></svg>
            <Caret className="mt-[9px]" color="#666" />
            <div className="mt-[7px] flex h-[13px] w-[16px] items-center justify-center border border-[#e0e0e0]"><span className="h-[5px] w-[10px] border border-[#555]" /></div>
            <span className="mt-auto mr-[-14px] mb-[4px] h-[7px] w-[7px] rounded-full border-y-2 border-[#ddd] bg-[#555]" />
        </div>
    );
}

function Viewport() {
    return (
        <div className="relative h-[545px] shrink-0 overflow-hidden bg-[linear-gradient(#3b3b3b,#9d9d9d)]">
            <Drawing />
            <div className="absolute top-[8px] right-[4px] flex items-center gap-[8px] text-white">
                <span className="h-[3px] w-[11px] bg-[#eee]" />
                <Restore />
                <span className="text-[15px] leading-none font-bold">×</span>
            </div>
            <NavBar />
            <Dialog />
        </div>
    );
}

function BottomTabs() {
    const sq = "flex h-[20px] w-[20px] shrink-0 items-center justify-center border border-[#444] bg-[linear-gradient(#e4e4e4,#c8c8c8)]";
    return (
        <div className="flex h-[21px] shrink-0 items-stretch border-t border-white bg-[linear-gradient(#d2d2d2,#a6a6a6)] text-[#111]">
            <div className={sq}><span className="h-[9px] w-[11px] border border-[#333] bg-white shadow-[-2px_-2px_0_-1px_#333]" /></div>
            <div className={sq}><span className="grid grid-cols-2 gap-px">{[0, 1, 2, 3].map((i) => <span key={i} className="h-[5px] w-[6px] border border-[#333]" />)}</span></div>
            <div className={sq}><Caret className="rotate-180" color="#222" /></div>
            <div className="ml-[1px] flex w-[67px] items-center justify-center rounded-t-[3px] border border-[#999] bg-[linear-gradient(#dedede,#bcbcbc)]">Součást1</div>
            <div className="flex w-[96px] items-center justify-between rounded-b-[3px] bg-white pr-[5px] pl-[8px]">Součást9.ipt<span className="h-[8px] w-[8px] border border-[#888] bg-[#ccc] text-[8px] leading-[6px] text-[#555]">×</span></div>
        </div>
    );
}

export default function App() {
    return (
        <div className="relative flex h-[725px] w-[1366px] flex-col overflow-hidden bg-[#3f3f3f] font-['Noto_Sans','Liberation_Sans',sans-serif] text-[11.4px]">
            <AppButton />
            <TitleBar />
            <div className="flex h-[18px] shrink-0 items-stretch bg-[#3f3f3f] pl-[44px] text-[#ececec]">
                <div className="flex w-[47px] items-center justify-center rounded-t-[2px] bg-white text-[#222]">Plech</div>
                {tabs.map((t) => <div key={t.label} className={`flex items-center justify-center whitespace-nowrap ${t.w}`}>{t.label}</div>)}
                <div className="ml-[22px] flex items-center gap-[4px]"><span className="h-[6px] w-[13px] rounded-[1px] bg-[#dedede]" /><Caret color="#ddd" /></div>
            </div>
            <Ribbon />
            <div className="flex h-[566px] shrink-0">
                <ModelPanel />
                <div className="flex min-w-0 flex-1 flex-col">
                    <Viewport />
                    <BottomTabs />
                </div>
            </div>
            <div className="flex h-[22px] shrink-0 items-center border-t border-[#999] bg-[linear-gradient(#ffffff,#c8c8c8)] pl-[4px] font-['Liberation_Sans',sans-serif] text-[#111]">
                <span className="flex-1">Pro nápovědu stiskněte F1</span>
                <span className="flex h-full w-[39px] items-center justify-center border-l border-[#bbb]">1</span>
                <span className="flex h-full w-[41px] items-center justify-center border-l border-[#bbb] pr-[14px]">2</span>
            </div>
        </div>
    );
}
